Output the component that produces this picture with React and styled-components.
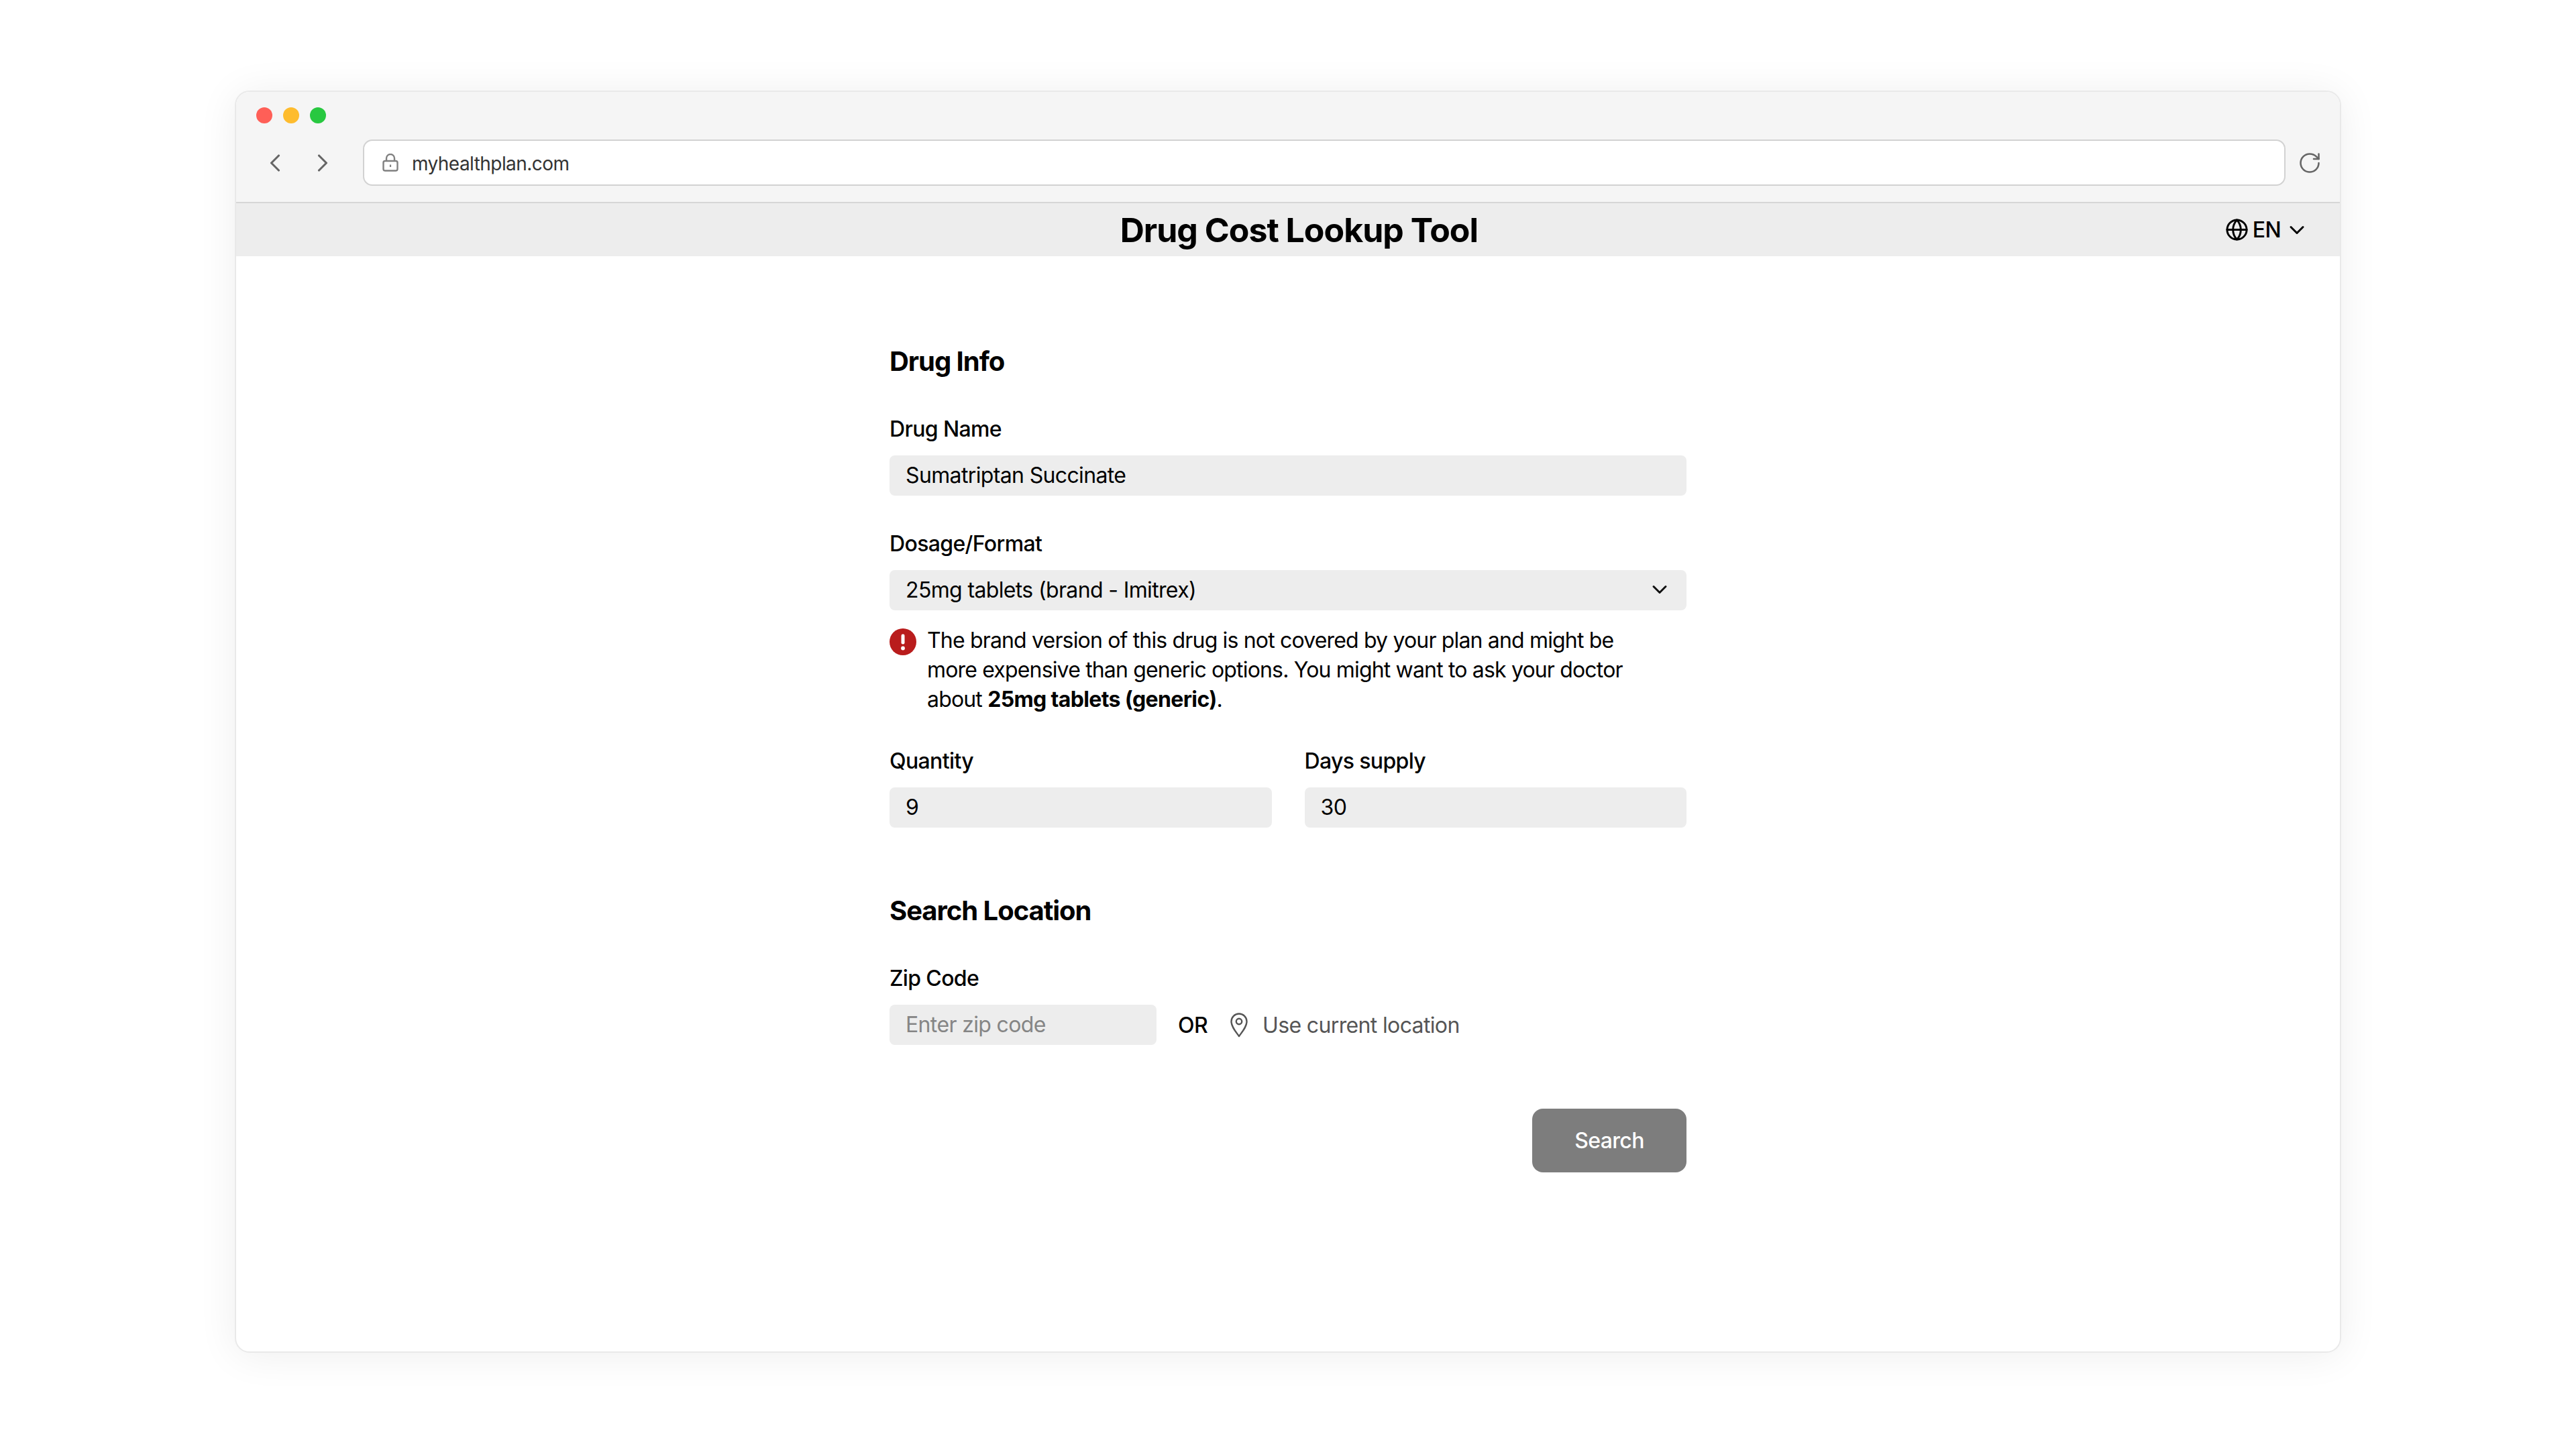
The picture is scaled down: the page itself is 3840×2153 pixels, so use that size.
import React from 'react';
import styled, { createGlobalStyle } from 'styled-components';
import { ChevronDown, ChevronLeft, ChevronRight, Globe, RotateCw } from 'lucide-react';

const GlobalStyle = createGlobalStyle`
  * {
    box-sizing: border-box;
    letter-spacing: -0.02em;
  }
  body {
    margin: 0;
    background: #fff;
    font-family: 'Inter', 'Liberation Sans', sans-serif;
    color: #000;
  }
`;

const LockIcon = () => (
  <svg width="24" height="27" viewBox="0 0 24 27" fill="none" stroke="#808080" strokeWidth="2.4">
    <rect x="1.5" y="11" width="21" height="14.5" rx="2.5" />
    <path d="M6 11V7a6 6 0 0 1 12 0v4" />
    <path d="M12 16.5v3.5" strokeWidth="2.2" />
  </svg>
);

const PinIcon = () => (
  <svg width="26" height="37" viewBox="0 0 26 37" fill="none" stroke="#555" strokeWidth="2.4">
    <path d="M13 35C8 28 1.5 21 1.5 13a11.5 11.5 0 0 1 23 0C24.500 21 18 28 13 35Z" strokeLinejoin="round" />
    <circle cx="13" cy="13" r="4.2" />
  </svg>
);

const AlertIcon = () => (
  <svg width="40" height="40" viewBox="0 0 40 40">
    <circle cx="20" cy="20" r="20" fill="#b91c1c" />
    <rect x="17.500" y="8.500" width="5" height="15" rx="2.200" fill="#fff" />
    <circle cx="20" cy="29.500" r="2.900" fill="#fff" />
  </svg>
);

const App = () => {
  return (
    <Page>
      <GlobalStyle />
      <BrowserWindow>
        <Chrome>
          <Dots>
            <Dot color="#ff5f57" />
            <Dot color="#febc2e" />
            <Dot color="#28c840" />
          </Dots>
          <Toolbar>
            <NavButtons>
              <ChevronLeft size={44} strokeWidth={1.7} color="#666" />
              <ChevronRight size={44} strokeWidth={1.7} color="#666" />
            </NavButtons>
            <AddressBar>
              <LockIcon />
              <Url>myhealthplan.com</Url>
            </AddressBar>
            <RotateCw size={36} strokeWidth={1.7} color="#666" />
          </Toolbar>
        </Chrome>

        <TitleBar>
          <Title>Drug Cost Lookup Tool</Title>
          <LangMenu>
            <Globe size={35} strokeWidth={2} />
            <LangText>EN</LangText>
            <ChevronDown size={36} strokeWidth={2} />
          </LangMenu>
        </TitleBar>

        <Content>
          <Form>
            <SectionTitle>Drug Info</SectionTitle>
            <Field $top={56}>
              <Label>Drug Name</Label>
              <Input readOnly value="Sumatriptan Succinate" />
            </Field>
            <Field $top={51}>
              <Label>Dosage/Format</Label>
              <SelectBox>
                <span>25mg tablets (brand - Imitrex)</span>
                <ChevronDown size={36} strokeWidth={2} color="#111" />
              </SelectBox>
            </Field>
            <Alert>
              <AlertIconWrap>
                <AlertIcon />
              </AlertIconWrap>
              <AlertText>
                The brand version of this drug is not covered by your plan and might be more
                expensive than generic options. You might want to ask your doctor about{' '}
                <AlertStrong>25mg tablets (generic)</AlertStrong>.
              </AlertText>
            </Alert>
            <TwoCols>
              <Field>
                <Label>Quantity</Label>
                <Input readOnly value="9" />
              </Field>
              <Field>
                <Label>Days supply</Label>
                <Input readOnly value="30" />
              </Field>
            </TwoCols>

            <SectionTitle $top={100}>Search Location</SectionTitle>
            <Field $top={56}>
              <Label>Zip Code</Label>
              <ZipRow>
                <ZipInput readOnly placeholder="Enter zip code" />
                <OrText>OR</OrText>
                <LocationLink>
                  <PinIcon />
                  <span>Use current location</span>
                </LocationLink>
              </ZipRow>
            </Field>
            <Actions>
              <SearchButton>Search</SearchButton>
            </Actions>
          </Form>
        </Content>
      </BrowserWindow>
    </Page>
  );
};

export default App;

// Styled Components
const Page = styled.div`
  height: 2153px;
  padding-top: 135px;
  display: flex;
  justify-content: center;
  overflow: hidden;
`;

const BrowserWindow = styled.div`
  width: 3140px;
  height: 1882px;
  background: #fff;
  border: 2px solid #e9e9e9;
  border-radius: 22px;
  box-shadow: 0 4px 60px rgba(0, 0, 0, 0.07);
  overflow: hidden;
  display: flex;
  flex-direction: column;
`;

const Chrome = styled.div`
  background: #f5f5f5;
  border-bottom: 2px solid #d6d6d6;
  padding: 23px 27px 24px 30px;
`;

const Dots = styled.div`
  display: flex;
  gap: 16px;
  margin-bottom: 24px;
`;

const Dot = styled.span`
  width: 24px;
  height: 24px;
  border-radius: 50%;
  background: ${(p) => p.color};
`;

const Toolbar = styled.div`
  display: flex;
  align-items: center;
  gap: 18px;
`;

const NavButtons = styled.div`
  display: flex;
  gap: 27px;
  margin-left: 6px;
  margin-right: 20px;
`;

const AddressBar = styled.div`
  flex: 1;
  height: 69px;
  background: #fff;
  border: 2px solid #d2d2d2;
  border-radius: 14px;
  padding-left: 27px;
  display: flex;
  align-items: center;
  gap: 20px;
`;

const Url = styled.span`
  padding-top: 2px;
  font-size: 28px;
  color: #333;
`;

const TitleBar = styled.div`
  height: 79px;
  background: #ededed;
  display: flex;
  align-items: center;
  padding: 0 46px 0 30px;
`;

const Title = styled.h1`
  flex: 1;
  margin: 0;
  text-align: center;
  font-size: 50px;
  font-weight: 700;
  padding-left: 174px;
`;

const LangMenu = styled.div`
  display: flex;
  align-items: center;
  gap: 6px;
`;

const LangText = styled.span`
  font-size: 32px;
  font-weight: 500;
`;

const Content = styled.main`
  flex: 1;
  display: flex;
  justify-content: center;
  padding-top: 133px;
`;

const Form = styled.div`
  width: 1188px;
`;

const SectionTitle = styled.h2`
  margin: ${(p) => p.$top || 0}px 0 0;
  font-size: 40px;
  line-height: 48px;
  font-weight: 700;
  letter-spacing: -0.026em;
`;

const Field = styled.div`
  margin-top: ${(p) => p.$top || 0}px;
  display: flex;
  flex-direction: column;
  gap: 20px;
`;

const Label = styled.label`
  padding-top: 1px;
  font-size: 32px;
  line-height: 39px;
  font-weight: 450;
`;

const Input = styled.input`
  width: 100%;
  height: 60px;
  border: none;
  outline: none;
  border-radius: 8px;
  background: #ededed;
  padding: 0 24px 2px;
  font-family: inherit;
  font-size: 32px;
  color: #000;
`;

const SelectBox = styled.div`
  height: 60px;
  border-radius: 8px;
  background: #ededed;
  padding: 0 22px 2px 24px;
  display: flex;
  align-items: center;
  justify-content: space-between;
  font-size: 32px;
`;

const Alert = styled.div`
  margin-top: 23px;
  display: flex;
  gap: 16px;
  padding-right: 80px;
`;

const AlertIconWrap = styled.div`
  flex: none;
  height: 40px;
  margin-top: 4px;
`;

const AlertText = styled.p`
  margin: 0;
  font-size: 32px;
  line-height: 44px;
  letter-spacing: -0.026em;
`;

const AlertStrong = styled.strong`
  font-weight: 700;
`;

const TwoCols = styled.div`
  margin-top: 49px;
  display: grid;
  grid-template-columns: 1fr 1fr;
  gap: 49px;
`;

const ZipRow = styled.div`
  display: flex;
  align-items: center;
`;

const ZipInput = styled(Input)`
  width: 398px;

  &::placeholder {
    color: #858585;
    opacity: 1;
  }
`;

const OrText = styled.span`
  margin-left: 32px;
  font-size: 32px;
  font-weight: 500;
`;

const LocationLink = styled.div`
  margin-left: 34px;
  display: flex;
  align-items: center;
  gap: 22px;
  font-size: 32px;
  color: #555;
`;

const Actions = styled.div`
  margin-top: 95px;
  display: flex;
  justify-content: flex-end;
`;

const SearchButton = styled.button`
  width: 230px;
  height: 95px;
  border: none;
  border-radius: 16px;
  background: #7d7d7d;
  color: #fff;
  font-family: inherit;
  font-size: 32px;
  font-weight: 450;
`;
